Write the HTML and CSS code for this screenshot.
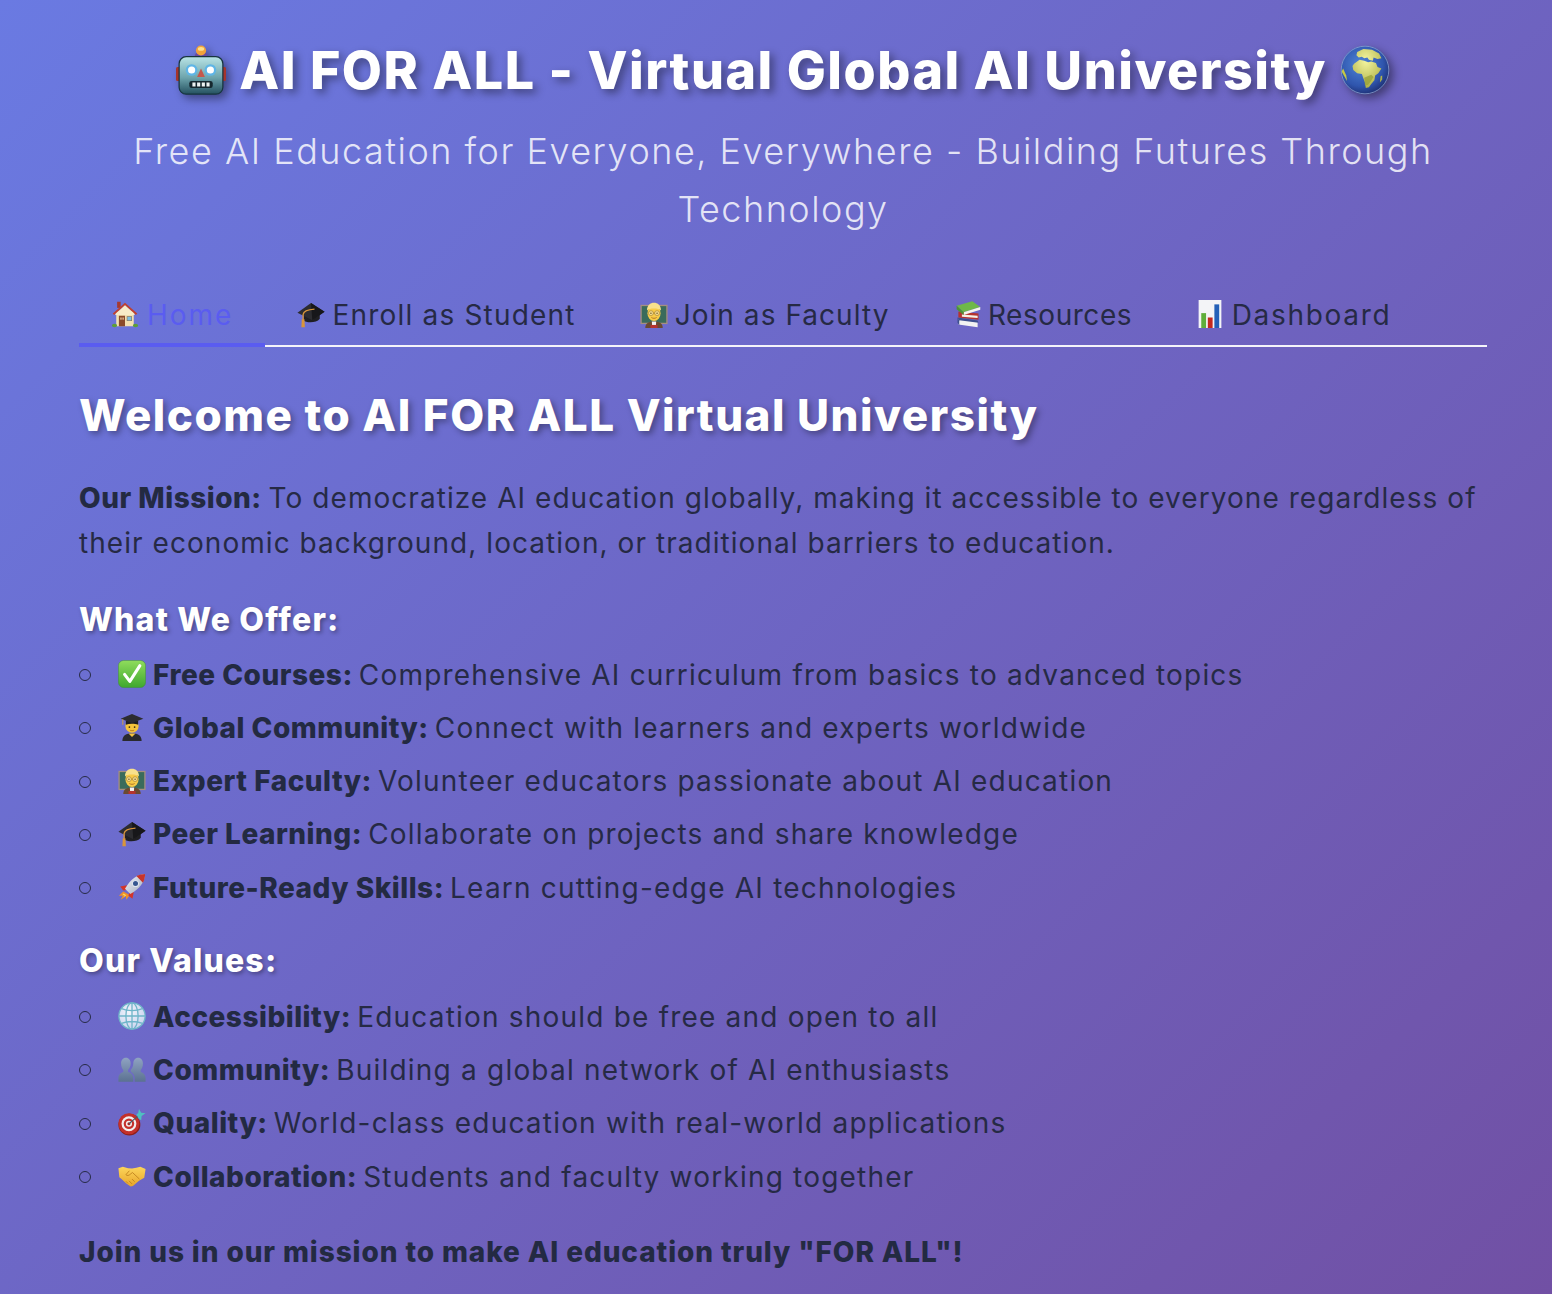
FILE: index.html
```html
<!DOCTYPE html>
<html lang="en">
<head>
<meta charset="utf-8">
<title>AI FOR ALL - Virtual Global AI University</title>
<link rel="stylesheet" href="styles.css">
</head>
<body>
<svg class="sprite" aria-hidden="true">
  <defs>
    <linearGradient id="g-robot" x1="0" y1="0" x2="0" y2="1"><stop offset="0" stop-color="#b9e4e6"/><stop offset=".55" stop-color="#6ea5ad"/><stop offset="1" stop-color="#24505f"/></linearGradient>
    <radialGradient id="g-globe" cx=".42" cy=".38" r=".65"><stop offset="0" stop-color="#4f86d8"/><stop offset=".7" stop-color="#2f55ad"/><stop offset="1" stop-color="#1d2f72"/></radialGradient>
    <radialGradient id="g-land" cx=".45" cy=".3" r=".8"><stop offset="0" stop-color="#f4f5a0"/><stop offset="1" stop-color="#a5a83a"/></radialGradient>
    <linearGradient id="g-check" x1="0" y1="0" x2="0" y2="1"><stop offset="0" stop-color="#8fdc5c"/><stop offset="1" stop-color="#3fa82f"/></linearGradient>
    <linearGradient id="g-people" x1="0" y1="0" x2="0" y2="1"><stop offset="0" stop-color="#8fa3c2"/><stop offset="1" stop-color="#5b7191"/></linearGradient>
    <radialGradient id="g-web" cx=".4" cy=".35" r=".7"><stop offset="0" stop-color="#f2f4fb"/><stop offset="1" stop-color="#c9d3ee"/></radialGradient>
    <linearGradient id="g-rocket" x1="0" y1="0" x2="1" y2="1"><stop offset="0" stop-color="#f4f6fa"/><stop offset="1" stop-color="#9fa9bd"/></linearGradient>
    <linearGradient id="g-shake" x1="0" y1="0" x2="0" y2="1"><stop offset="0" stop-color="#fcd55a"/><stop offset="1" stop-color="#e8a52a"/></linearGradient>

    <symbol id="robot" viewBox="0 0 64 64">
      <rect x="0" y="28" width="6" height="18" rx="2" fill="#a5342c"/><rect x="58" y="28" width="6" height="18" rx="2" fill="#a5342c"/>
      <path d="M24 14a8 5 0 0 1 16 0v3H24z" fill="#6a4aa0"/>
      <circle cx="32" cy="7" r="6.500" fill="#f2a33a"/><ellipse cx="32" cy="5" rx="4" ry="2.500" fill="#fde08a"/>
      <rect x="4" y="15" width="56" height="48" rx="9" fill="url(#g-robot)" stroke="#17353f" stroke-width="1.6"/>
      <circle cx="20" cy="32" r="7.500" fill="#5fb5e6"/><circle cx="20" cy="32" r="4.600" fill="#fff"/>
      <circle cx="44" cy="32" r="7.500" fill="#5fb5e6"/><circle cx="44" cy="32" r="4.600" fill="#fff"/>
      <path d="M32 30l5 11H27z" fill="#c5574c"/>
      <rect x="17" y="46" width="30" height="9" rx="3" fill="#16282f"/>
      <path d="M21 48h4v5h-4zM27 48h4v5h-4zM33 48h4v5h-4zM39 48h4v5h-4z" fill="#eef2f2"/>
    </symbol>

    <symbol id="earth" viewBox="0 0 64 64">
      <circle cx="32" cy="32" r="31" fill="url(#g-globe)"/>
      <path d="M22 9l8-4 11 1 9 5 3 6-5 1-5-2-1 4-5-1-2-3-4 1-3-2-4 1-3-3zM18 24l7-5 6 1 5 2 4-1 6 2 2 5 5 2-4 6-4 3-1 6-4 5-3 4-4 1-1-7-2-5-2-6-6-1-5-4-1-5zM52 40l2-1 0 5-3 4z" fill="url(#g-land)"/>
      <path d="M2 34l2-4 4 9 1 7z" fill="#c5c845"/>
      <path d="M31 42l9-4 3 3-4 6-3 4-4 1z" fill="#9aa33b" opacity=".8"/>
      <circle cx="32" cy="32" r="30.500" fill="none" stroke="#8fa2cf" stroke-width="1"/>
    </symbol>

    <symbol id="house" viewBox="0 0 64 64">
      <rect x="14" y="4" width="8" height="14" fill="#a5392f"/>
      <rect x="12" y="26" width="40" height="34" fill="#f2e0b0"/>
      <path d="M32 6L4 31l3 3L32 12l25 22 3-3z" fill="#c0402f"/>
      <path d="M32 12L10 32v2h44v-2z" fill="#f8ecc8"/>
      <rect x="18" y="36" width="14" height="24" fill="#8a4a2a"/>
      <rect x="21" y="40" width="3.500" height="5" fill="#d9b58e"/><rect x="26" y="40" width="3.500" height="5" fill="#d9b58e"/>
      <rect x="36" y="37" width="12" height="11" fill="#8a7a60"/><rect x="37.500" y="38.500" width="9" height="8" fill="#7cc0e4"/>
      <ellipse cx="8" cy="58" rx="6" ry="4" fill="#5d9e38"/><ellipse cx="56" cy="58" rx="6" ry="4" fill="#5d9e38"/>
    </symbol>

    <symbol id="cap" viewBox="0 0 64 64">
      <path d="M15 30v17c5 5 29 7 37-4V30z" fill="#1f1f22"/>
      <path d="M32 7l31 20-28 19L1 29z" fill="#2c2c30"/>
      <path d="M32 7l31 20-28 19z" fill="#17171a"/>
      <path d="M40 21C26 22 15 26 14 33v12" fill="none" stroke="#d9953a" stroke-width="3"/>
      <path d="M11 44h6l1 18h-8z" fill="#d9953a"/>
    </symbol>

    <symbol id="teacher" viewBox="0 0 64 64">
      <rect x="1" y="11" width="62" height="44" fill="#a58f7e"/><rect x="4" y="14" width="56" height="38" fill="#3a6b5b"/>
      <path d="M12 64c0-12 9-15 20-15s20 3 20 15z" fill="#6a4a30"/>
      <path d="M27 49h10l-1 15h-8z" fill="#f2f2f2"/><path d="M24 57h16v7H24z" fill="#b5332e"/>
      <ellipse cx="32" cy="30" rx="15" ry="18" fill="#f8cb48"/>
      <path d="M16 24C15 0 49 0 48 24c-5-6-27-6-32 0z" fill="#f8e08c"/>
      <circle cx="25" cy="30" r="5.500" fill="#fbe08c" stroke="#8a6a2e" stroke-width="1.2"/><circle cx="39" cy="30" r="5.500" fill="#fbe08c" stroke="#8a6a2e" stroke-width="1.2"/>
      <path d="M30 30h4" stroke="#8a6a2e" stroke-width="1.2"/>
      <circle cx="25" cy="30" r="1.500" fill="#3a2a10"/><circle cx="39" cy="30" r="1.500" fill="#3a2a10"/>
      <path d="M26 40c4 2.500 8 2.500 12 0" fill="none" stroke="#a5631c" stroke-width="1.8"/>
    </symbol>

    <symbol id="books" viewBox="0 0 64 64">
      <path d="M10 44l44 6v12L10 56z" fill="#f2f2f2"/><path d="M8 40l46 7 2 5-44-6z" fill="#3d4f8f"/><path d="M8 40v12l4 6V46z" fill="#3d4f8f"/>
      <path d="M10 26l46 5v14l-46-5z" fill="#b5332e"/><path d="M18 33l36 3v5l-36-3z" fill="#f4f1e6"/>
      <path d="M6 13L42 3l18 13-38 12z" fill="#6eb84a"/><path d="M22 28l38-12v6L22 34z" fill="#f4f4ee"/><path d="M6 13v8l16 13v-6z" fill="#4c9436"/>
    </symbol>

    <symbol id="chart" viewBox="0 0 64 64">
      <rect x="6" y="0" width="52" height="64" fill="#f3f4f7"/>
      <rect x="12" y="30" width="11" height="34" fill="#5fae3a"/><rect x="27" y="40" width="11" height="24" fill="#c2291f"/><rect x="42" y="10" width="11" height="54" fill="#2460b8"/>
    </symbol>

    <symbol id="check" viewBox="0 0 64 64">
      <rect x="1" y="1" width="62" height="62" rx="12" fill="url(#g-check)" stroke="#3a8f2a"/>
      <path d="M15 33l12 16L50 13" fill="none" stroke="#fff" stroke-width="7" stroke-linecap="round" stroke-linejoin="round"/>
    </symbol>

    <symbol id="student" viewBox="0 0 64 64">
      <path d="M10 64c0-13 9-17 22-17s22 4 22 17z" fill="#2a2a2e"/>
      <path d="M24 47h16l-8 8z" fill="#f5c33b"/>
      <circle cx="32" cy="30" r="15" fill="#f5c33b"/>
      <path d="M18 18h28v9c-8-3-20-3-28 0z" fill="#1f1f22"/>
      <path d="M32 2l26 11-26 10L6 13z" fill="#2c2c30"/>
      <path d="M11 14v13" stroke="#d9a43a" stroke-width="2"/>
      <circle cx="26" cy="32" r="2" fill="#3a2a10"/><circle cx="38" cy="32" r="2" fill="#3a2a10"/>
      <path d="M27 39c3 2 7 2 10 0" fill="none" stroke="#a5631c" stroke-width="1.6"/>
    </symbol>

    <symbol id="rocket" viewBox="0 0 64 64">
      <path d="M12 42L2 52l9 0-5 9 12-8 1 8 8-11z" fill="#f0902a"/><path d="M13 47l-3 4 5-1-2 5 6-4z" fill="#fbdc5a"/>
      <path d="M20 28L5 31l7 9 10-2zM36 44l-3 15-9-7 2-10z" fill="#d2352a"/>
      <path d="M62 2C44 3 28 14 16 36l12 12C50 36 61 20 62 2z" fill="url(#g-rocket)"/>
      <path d="M62 2c-7 0-14 2-20 5l15 15c3-6 5-13 5-20z" fill="#c7352b"/>
      <circle cx="40" cy="24" r="7" fill="#35568f" stroke="#dfe4ee" stroke-width="2.500"/>
    </symbol>

    <symbol id="web" viewBox="0 0 64 64">
      <circle cx="32" cy="32" r="30" fill="url(#g-web)" stroke="#6fb5c9" stroke-width="3"/>
      <g fill="none" stroke="#6fb5c9" stroke-width="3">
        <ellipse cx="32" cy="32" rx="14" ry="30"/><path d="M32 2v60M2 32h60M8 15c14 6 34 6 48 0M8 49c14-6 34-6 48 0"/>
      </g>
    </symbol>

    <symbol id="people" viewBox="0 0 64 64">
      <g fill="url(#g-people)">
        <path d="M18 6c7 0 11 6 11 13s-3 12-6 15v5c6 2 12 5 12 14v8H1v-8c0-9 6-12 11-14v-5c-3-3-5-8-5-15S11 6 18 6z"/>
        <path d="M46 6c7 0 11 6 11 13s-2 12-5 15v5c5 2 11 5 11 14v8H38v-9c0-7-5-12-9-14v-4c3-3 6-8 6-15S39 6 46 6z"/>
      </g>
    </symbol>

    <symbol id="target" viewBox="0 0 64 64">
      <circle cx="26" cy="38" r="25" fill="#8f1f1a"/><circle cx="25" cy="36" r="24" fill="#c5302a"/>
      <circle cx="25" cy="36" r="17" fill="#f2eeee"/><circle cx="25" cy="36" r="12" fill="#c5302a"/>
      <circle cx="25" cy="36" r="7" fill="#f2eeee"/><circle cx="25" cy="36" r="3.500" fill="#b0261f"/>
      <path d="M25 36L46 18" stroke="#4a5a66" stroke-width="2.500"/>
      <path d="M42 14l4-2 2-10 5 9 10 1-9 6-1 10-6-4z" fill="#4fc0c0"/>
    </symbol>

    <symbol id="shake" viewBox="0 0 64 64">
      <path d="M1 14l10-3 12 3 9 1 10-2 9-2 12 5-3 20-12 7-14 12-5 1-10-7-11-10-5-4z" fill="url(#g-shake)"/>
      <path d="M26 20l-8 9c3 3 7 2 10-1l5-4 16 15M38 45l-6-6M32 50l-7-7M23 49l-5-5" fill="none" stroke="#b97a1a" stroke-width="1.8"/>
    </symbol>
  </defs>
</svg>

<main class="page">
  <header class="hero">
    <h1 class="title"><svg class="emoji-xl"><use href="#robot"/></svg> AI FOR ALL - Virtual Global AI University <svg class="emoji-xl"><use href="#earth"/></svg></h1>
    <p class="subtitle">Free AI Education for Everyone, Everywhere - Building Futures Through Technology</p>
  </header>

  <nav class="tabs">
    <a class="tab tab-active"><svg class="emoji"><use href="#house"/></svg> Home</a>
    <a class="tab"><svg class="emoji"><use href="#cap"/></svg> Enroll as Student</a>
    <a class="tab tab-tight"><svg class="emoji"><use href="#teacher"/></svg> Join as Faculty</a>
    <a class="tab tab-narrow"><svg class="emoji"><use href="#books"/></svg> Resources</a>
    <a class="tab tab-wide"><svg class="emoji"><use href="#chart"/></svg> Dashboard</a>
  </nav>

  <section class="content">
    <h2 class="welcome">Welcome to AI FOR ALL Virtual University</h2>
    <p class="mission"><strong>Our Mission:</strong> To democratize AI education globally, making it accessible to everyone regardless of their economic background, location, or traditional barriers to education.</p>

    <h3 class="section-title">What We Offer:</h3>
    <ul class="list">
      <li class="item"><div><svg class="emoji"><use href="#check"/></svg> <strong>Free Courses:</strong> Comprehensive AI curriculum from basics to advanced topics</div></li>
      <li class="item"><div><svg class="emoji"><use href="#student"/></svg> <strong>Global Community:</strong> Connect with learners and experts worldwide</div></li>
      <li class="item"><div><svg class="emoji"><use href="#teacher"/></svg> <strong>Expert Faculty:</strong> Volunteer educators passionate about AI education</div></li>
      <li class="item"><div><svg class="emoji"><use href="#cap"/></svg> <strong>Peer Learning:</strong> Collaborate on projects and share knowledge</div></li>
      <li class="item"><div><svg class="emoji"><use href="#rocket"/></svg> <strong>Future-Ready Skills:</strong> Learn cutting-edge AI technologies</div></li>
    </ul>

    <h3 class="section-title section-values">Our Values:</h3>
    <ul class="list">
      <li class="item"><div><svg class="emoji"><use href="#web"/></svg> <strong>Accessibility:</strong> Education should be free and open to all</div></li>
      <li class="item"><div><svg class="emoji"><use href="#people"/></svg> <strong>Community:</strong> Building a global network of AI enthusiasts</div></li>
      <li class="item"><div><svg class="emoji"><use href="#target"/></svg> <strong>Quality:</strong> World-class education with real-world applications</div></li>
      <li class="item"><div><svg class="emoji"><use href="#shake"/></svg> <strong>Collaboration:</strong> Students and faculty working together</div></li>
    </ul>

    <p class="closing"><strong>Join us in our mission to make AI education truly "FOR ALL"!</strong></p>
  </section>
</main>
</body>
</html>
```

FILE: styles.css
```css
* { box-sizing: border-box; }

html, body { margin: 0; height: 100%; }

body {
  background: linear-gradient(135deg, #6a7ae2 0%, #7150a4 100%);
  font-family: "Inter", "Liberation Sans", sans-serif;
  color: #262a45;
  overflow: hidden;
}

.sprite { position: absolute; width: 0; height: 0; }

.page { padding: 0 65px 0 79px; }

.hero { text-align: center; padding-top: 40px; }

.title {
  margin: 0;
  font-size: 52px;
  line-height: 62px;
  font-weight: 800;
  letter-spacing: 1.5px;
  color: #fff;
  text-shadow: 4px 4px 8px rgba(0, 0, 0, 0.4);
  white-space: nowrap;
}

.emoji-xl { width: 50px; height: 50px; vertical-align: -6px; filter: drop-shadow(4px 4px 4px rgba(0, 0, 0, 0.4)); }

.subtitle {
  margin: 20px 0 0;
  font-size: 36px;
  line-height: 58px;
  font-weight: 300;
  letter-spacing: 1.5px;
  color: rgba(255, 255, 255, 0.82);
}

.tabs {
  display: flex;
  margin-top: 49px;
  border-bottom: 2px solid #f4f4fa;
}

.tab {
  display: block;
  padding: 0 32px;
  height: 60px;
  line-height: 56px;
  font-size: 28px;
  letter-spacing: 1.2px;
  margin-bottom: -2px;
  white-space: nowrap;
}

.tab-active { color: #5a5cf0; border-bottom: 4px solid #5a5cf0; letter-spacing: 2px; }

.tab-tight { letter-spacing: 1.05px; }

.tab-narrow { letter-spacing: 0.55px; }

.tab-wide { letter-spacing: 1.7px; }

.emoji { width: 28px; height: 28px; vertical-align: -3px; margin-right: -2px; }

.content { padding-top: 40px; }

.welcome {
  margin: 0 0 33px;
  font-size: 44px;
  line-height: 56px;
  font-weight: 800;
  letter-spacing: 1.5px;
  color: #fff;
  text-shadow: 3px 3px 6px rgba(0, 0, 0, 0.35);
}

.mission, .closing { margin: 0; font-size: 28px; line-height: 45px; letter-spacing: 1.05px; }

.mission { margin-bottom: 33px; }

.section-title {
  margin: 0 0 11.500px;
  font-size: 32px;
  line-height: 42px;
  font-weight: 800;
  letter-spacing: 1.2px;
  color: #fff;
  text-shadow: 2px 2px 4px rgba(0, 0, 0, 0.35);
}

.section-values { margin: 29px 0 13px; }

.list { margin: 0; padding: 0; list-style: none; }

.item {
  display: flex;
  align-items: center;
  gap: 27px;
  font-size: 28px;
  line-height: 45px;
  letter-spacing: 1.2px;
  margin-bottom: 8.300px;
}

.item::before {
  content: "";
  flex: none;
  width: 10px;
  height: 10px;
  border: 1.5px solid #262a45;
  border-radius: 50%;
}

strong { font-weight: 800; color: #232a42; letter-spacing: 0.5px; margin-right: -3px; }

.mission strong { margin-right: -2px; }

.closing { margin-top: 30px; }

.closing strong { letter-spacing: 0.9px; }
```
